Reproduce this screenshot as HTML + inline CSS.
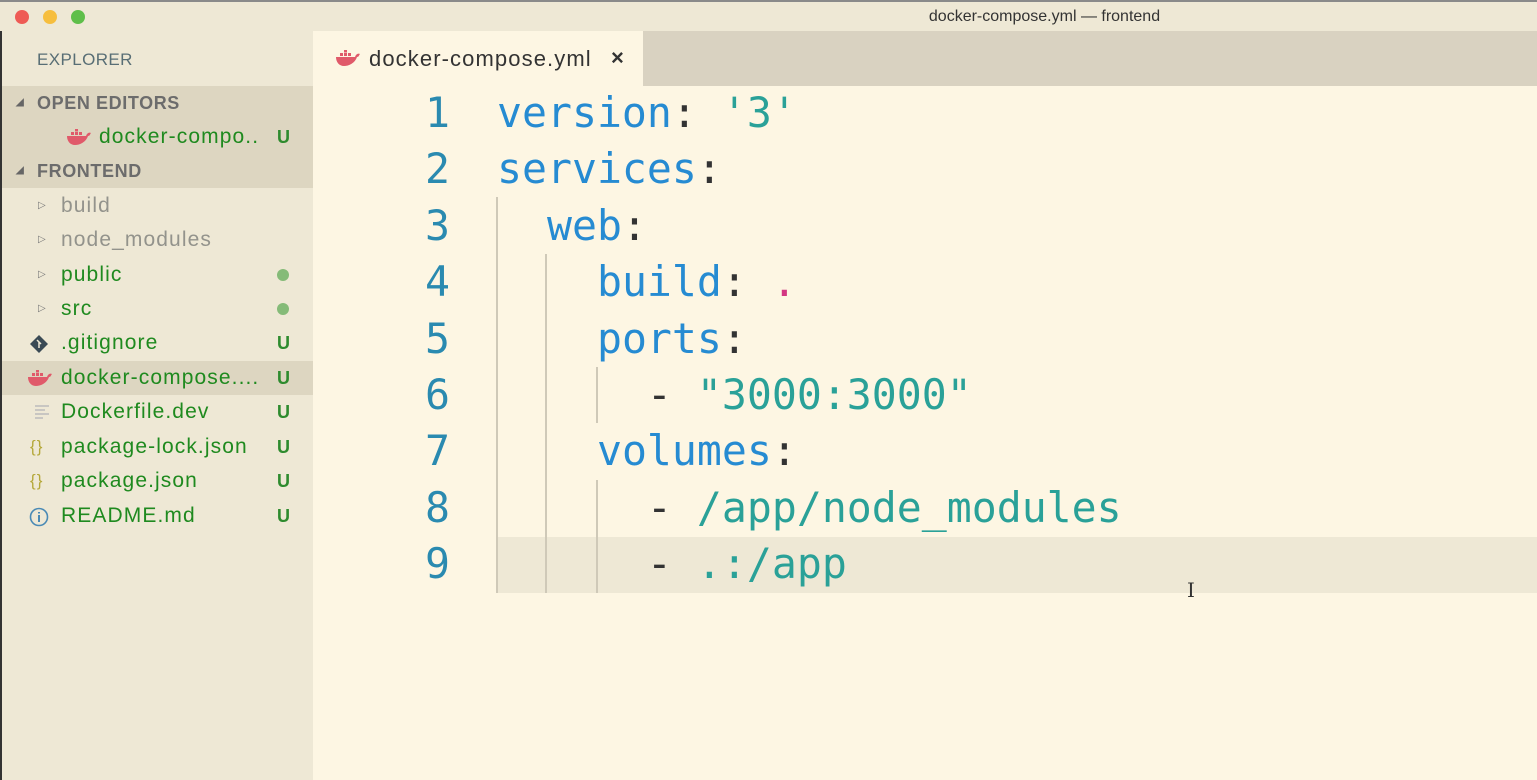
<!DOCTYPE html>
<html><head><meta charset="utf-8"><style>
*{margin:0;padding:0;box-sizing:border-box}
body{width:1537px;height:780px;overflow:hidden;background:#fdf6e3;font-family:"Liberation Sans",sans-serif;position:relative}
.title{position:absolute;left:0;top:0;width:1537px;height:31px;background:#eee8d5;border-top:2px solid #8a8a8a}
.title .t{position:absolute;left:0;right:0;top:6px;text-align:center;font-size:16px;color:#333;padding-left:552px}
.dot{position:absolute;top:8px;width:14px;height:14px;border-radius:50%}
.side{position:absolute;left:0;top:31px;width:313px;height:749px;background:#eee8d5;border-left:2px solid #333;overflow:hidden}
.side .h{position:absolute;left:35px;top:19px;font-size:17px;color:#586e75;letter-spacing:.4px}
.row{position:absolute;left:0;width:311px;height:34px;font-size:21px;line-height:34px;color:#1f8a1f;letter-spacing:1.1px}
.sec{background:#ddd6c1;color:#6c6c6c;font-weight:bold;font-size:18px;letter-spacing:.6px}
.sec span{position:absolute;left:35px}
.tri{position:absolute;left:14px;font-size:10px;color:#666}
.row .n{position:absolute;left:59px}
.row .u{position:absolute;left:275px;color:#2e8b2e;font-weight:bold;font-size:18px;letter-spacing:0}
.row .g{position:absolute;left:275px;top:11px;width:12px;height:12px;border-radius:50%;background:#85bb78}
.ar{position:absolute;left:36px;font-size:10px;color:#777}
.ic{position:absolute;left:27px;top:8px}
.tabbar{position:absolute;left:313px;top:31px;width:1224px;height:55px;background:#d9d2c1}
.tab{position:absolute;left:313px;top:31px;width:330px;height:56px;background:#fdf6e3}
.tab .n{position:absolute;left:56px;top:15px;font-size:22px;color:#333;letter-spacing:1.1px}
.tab .x{position:absolute;left:298px;top:14px;font-size:22px;color:#333;font-weight:bold}
.code{position:absolute;left:0;top:85px;font-family:"DejaVu Sans Mono",monospace;font-size:41.5px}
.ln{position:absolute;left:360px;width:90px;text-align:right;color:#2a8ab0;height:56.4px;line-height:56.4px}
.cl{position:absolute;left:497px;white-space:pre;height:56.4px;line-height:56.4px;color:#333}
.k{color:#268bd2}.s{color:#2aa198}.p{color:#d33682}
.gd{position:absolute;width:2px;background:#cfc9b8}
.hl{position:absolute;left:497px;top:537px;width:1040px;height:56px;background:#eee8d5}
</style></head><body>
<div class="title"><div class="dot" style="left:15px;background:#ee5b55"></div><div class="dot" style="left:43px;background:#f6be3e"></div><div class="dot" style="left:71px;background:#5fbf4a"></div><div class="t">docker-compose.yml — frontend</div></div>
<div class="side">
<div class="h">EXPLORER</div>
<div class="row sec" style="top:55px"><i class="tri" style="font-style:normal">◢</i><span>OPEN EDITORS</span></div>
<div class="row" style="top:89px;background:#ddd6c1"><svg style="position:absolute;left:64px;top:9px" width="26" height="16" viewBox="0 0 26 16"><path d="M1 7h19c1-3 3-4 5-3-1 1-1 3-3 3-2 6-8 9-13 9S1 12 1 7z" fill="#e05a6a"/><rect x="5" y="3" width="3" height="3" fill="#e05a6a"/><rect x="9" y="3" width="3" height="3" fill="#e05a6a"/><rect x="13" y="3" width="3" height="3" fill="#e05a6a"/><rect x="9" y="0" width="3" height="2.5" fill="#e05a6a"/></svg><span class="n" style="left:97px">docker-compo..</span><span class="u">U</span></div>
<div class="row sec" style="top:123px"><i class="tri" style="font-style:normal">◢</i><span>FRONTEND</span></div>
<div class="row" style="top:158px;color:#93938c"><i class="ar" style="font-style:normal">▷</i><span class="n">build</span></div>
<div class="row" style="top:192px;color:#93938c"><i class="ar" style="font-style:normal">▷</i><span class="n">node_modules</span></div>
<div class="row" style="top:227px"><i class="ar" style="font-style:normal">▷</i><span class="n">public</span><span class="g"></span></div>
<div class="row" style="top:261px"><i class="ar" style="font-style:normal">▷</i><span class="n">src</span><span class="g"></span></div>
<div class="row" style="top:295px"><svg class="ic" width="20" height="20" viewBox="0 0 20 20"><path d="M10 1l9 9-9 9-9-9z" fill="#3a4a55"/><path d="M8 6l4 4M10 8v6" stroke="#eee8d5" stroke-width="1.5"/></svg><span class="n">.gitignore</span><span class="u">U</span></div>
<div class="row" style="top:330px;background:#ddd6c1"><svg style="position:absolute;left:25px;top:9px" width="26" height="16" viewBox="0 0 26 16"><path d="M1 7h19c1-3 3-4 5-3-1 1-1 3-3 3-2 6-8 9-13 9S1 12 1 7z" fill="#e05a6a"/><rect x="5" y="3" width="3" height="3" fill="#e05a6a"/><rect x="9" y="3" width="3" height="3" fill="#e05a6a"/><rect x="13" y="3" width="3" height="3" fill="#e05a6a"/><rect x="9" y="0" width="3" height="2.5" fill="#e05a6a"/></svg><span class="n">docker-compose....</span><span class="u">U</span></div>
<div class="row" style="top:364px"><svg class="ic" style="left:32px" width="16" height="16" viewBox="0 0 16 16"><path d="M1 3h14M1 7h10M1 11h14M1 15h8" stroke="#bbb" stroke-width="1.6"/></svg><span class="n">Dockerfile.dev</span><span class="u">U</span></div>
<div class="row" style="top:399px"><span style="position:absolute;left:28px;color:#b5a83a;font-size:17px">{}</span><span class="n">package-lock.json</span><span class="u">U</span></div>
<div class="row" style="top:433px"><span style="position:absolute;left:28px;color:#b5a83a;font-size:17px">{}</span><span class="n">package.json</span><span class="u">U</span></div>
<div class="row" style="top:468px"><svg class="ic" width="20" height="20" viewBox="0 0 20 20"><circle cx="10" cy="10" r="8.5" fill="none" stroke="#4a8ab5" stroke-width="1.6"/><path d="M10 8v7M10 5v1.5" stroke="#4a8ab5" stroke-width="2"/></svg><span class="n">README.md</span><span class="u">U</span></div>
</div>
<div class="tabbar"></div>
<div class="tab"><svg style="position:absolute;left:22px;top:19px" width="26" height="16" viewBox="0 0 26 16"><path d="M1 7h19c1-3 3-4 5-3-1 1-1 3-3 3-2 6-8 9-13 9S1 12 1 7z" fill="#e05a6a"/><rect x="5" y="3" width="3" height="3" fill="#e05a6a"/><rect x="9" y="3" width="3" height="3" fill="#e05a6a"/><rect x="13" y="3" width="3" height="3" fill="#e05a6a"/><rect x="9" y="0" width="3" height="2.5" fill="#e05a6a"/></svg><span class="n">docker-compose.yml</span><span class="x">×</span></div>
<div class="hl"></div>
<div class="gd" style="left:496px;top:197px;height:396px"></div>
<div class="gd" style="left:545px;top:254px;height:339px"></div>
<div class="gd" style="left:596px;top:367px;height:56px"></div>
<div class="gd" style="left:596px;top:480px;height:113px"></div>
<div class="code">
<div class="ln" style="top:0">1</div><div class="cl" style="top:0"><span class="k">version</span>: <span class="s">'3'</span></div>
<div class="ln" style="top:56.4px">2</div><div class="cl" style="top:56.4px"><span class="k">services</span>:</div>
<div class="ln" style="top:112.8px">3</div><div class="cl" style="top:112.8px">  <span class="k">web</span>:</div>
<div class="ln" style="top:169.2px">4</div><div class="cl" style="top:169.2px">    <span class="k">build</span>: <span class="p">.</span></div>
<div class="ln" style="top:225.6px">5</div><div class="cl" style="top:225.6px">    <span class="k">ports</span>:</div>
<div class="ln" style="top:282px">6</div><div class="cl" style="top:282px">      - <span class="s">"3000:3000"</span></div>
<div class="ln" style="top:338.4px">7</div><div class="cl" style="top:338.4px">    <span class="k">volumes</span>:</div>
<div class="ln" style="top:394.8px">8</div><div class="cl" style="top:394.8px">      - <span class="s">/app/node_modules</span></div>
<div class="ln" style="top:451.2px">9</div><div class="cl" style="top:451.2px">      - <span class="s">.:/app</span></div>
</div>
<div style="position:absolute;left:1187px;top:578px;font-family:'DejaVu Serif',serif;font-size:20px;color:#333">I</div>
</body></html>
